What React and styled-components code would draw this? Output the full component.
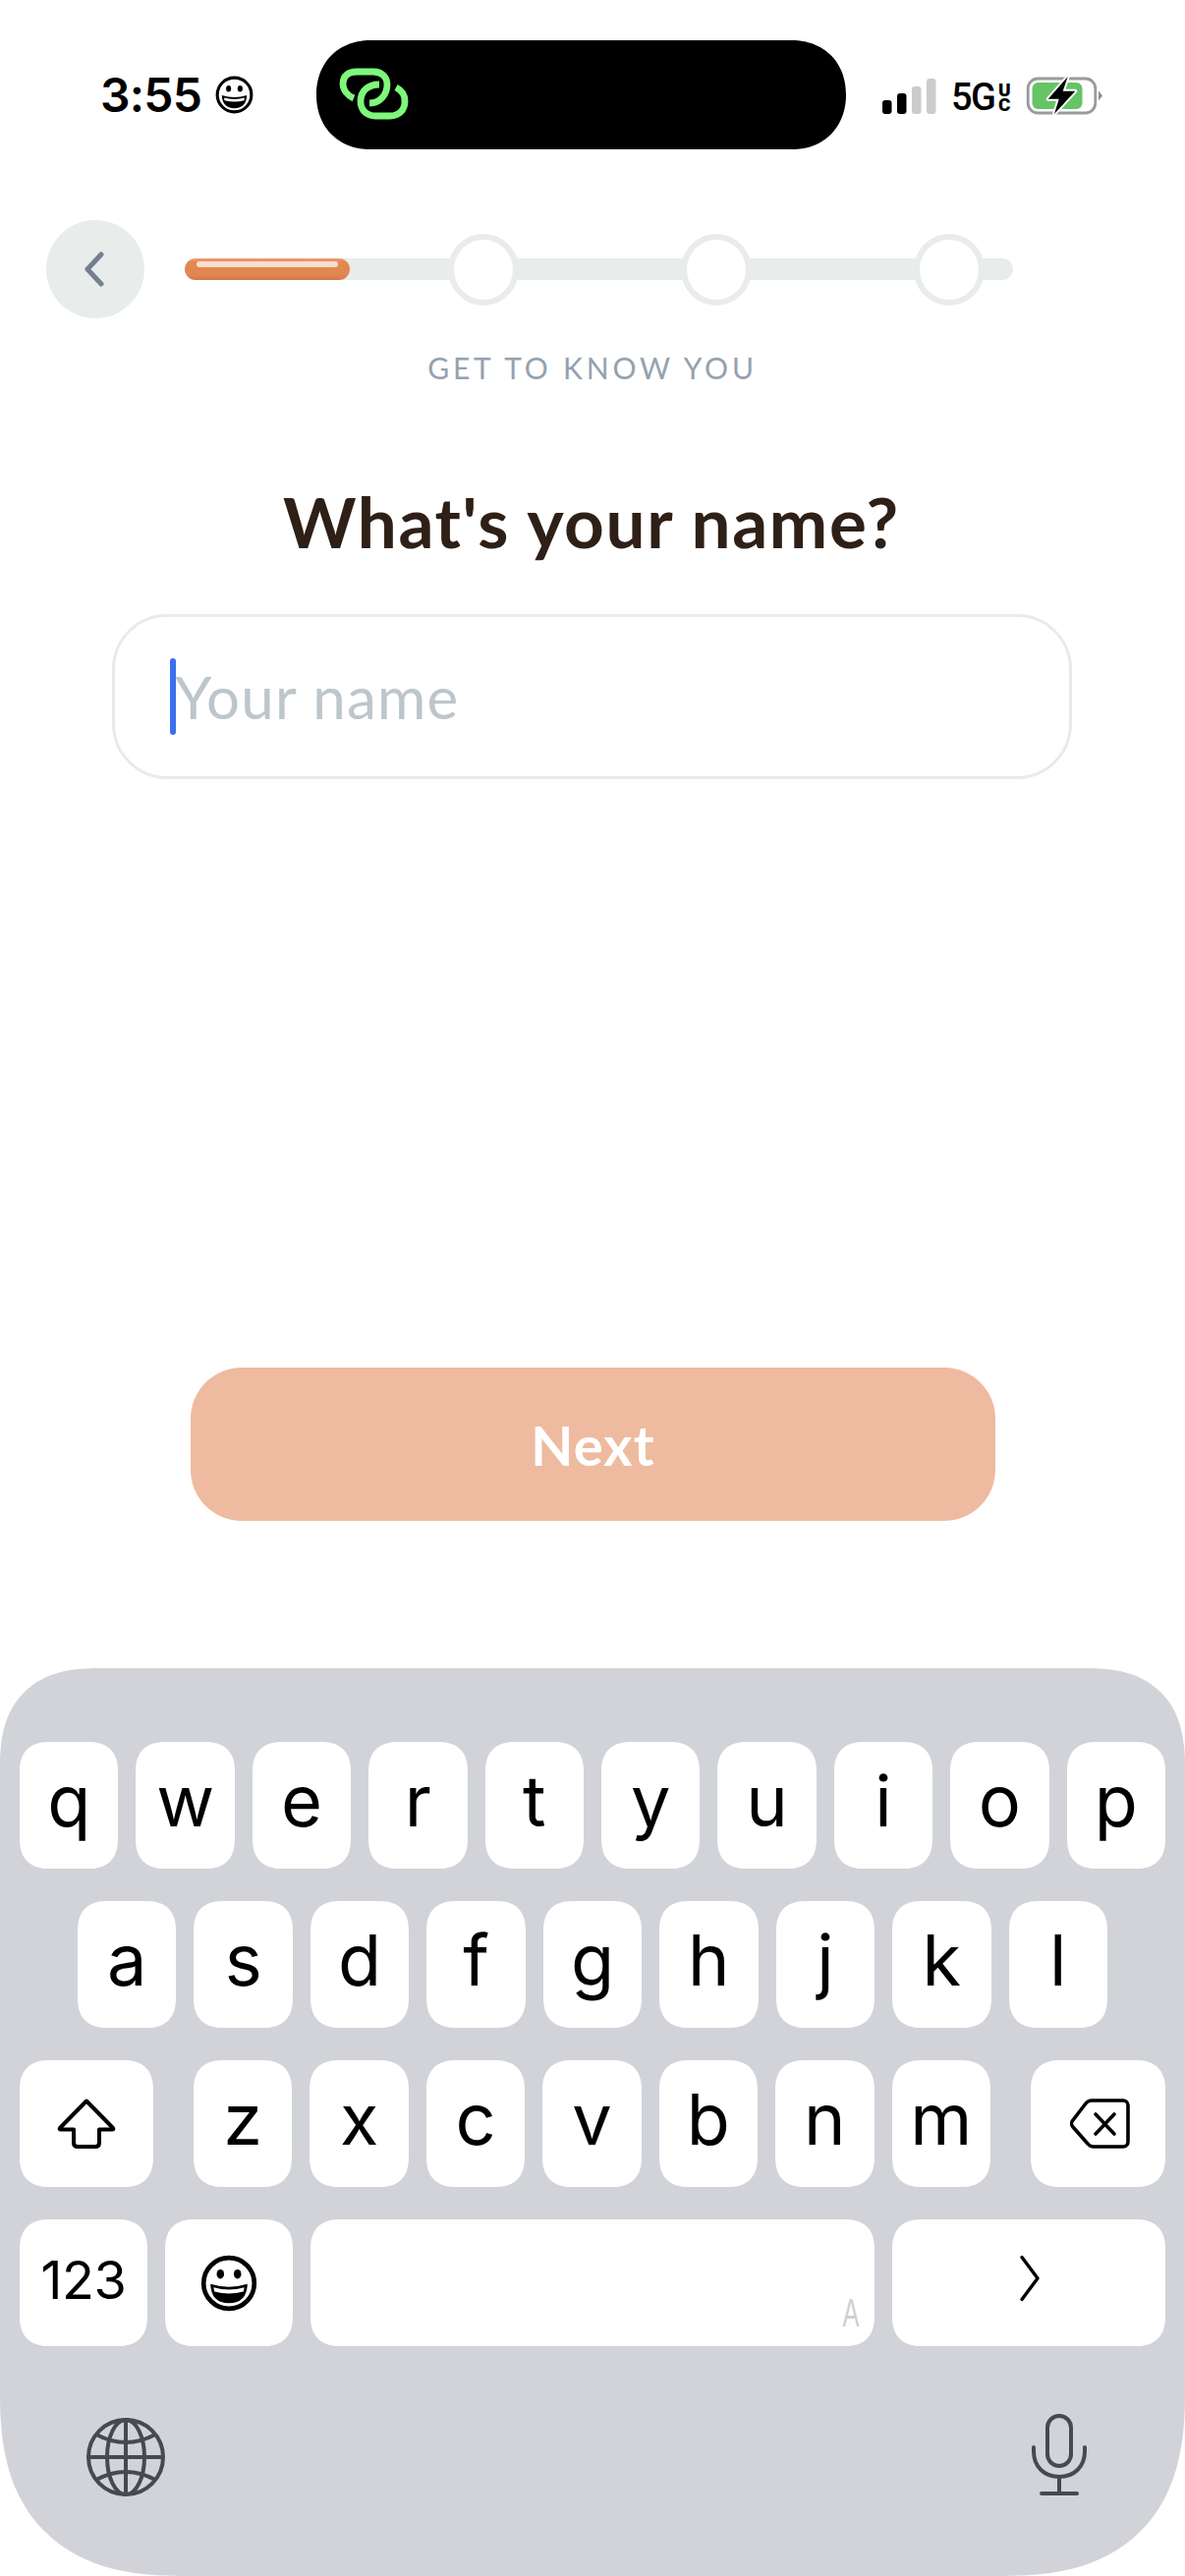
import React from "react";
import styled, { createGlobalStyle } from "styled-components";

const Global = createGlobalStyle`
  html, body { margin: 0; padding: 0; background: #fff; }
  * { box-sizing: border-box; }
`;

const Page = styled.div`
  width: 1206px;
  height: 2622px;
  display: flex;
  flex-direction: column;
  overflow: hidden;
  background: #fff;
  font-family: Lato, "Noto Sans", sans-serif;
`;

const StatusBar = styled.div`
  display: flex;
  align-items: center;
  height: 111px;
  margin-top: 41px;
  padding-left: 102px;
`;

const Time = styled.span`
  font-family: Inter, sans-serif;
  font-size: 48px;
  font-weight: 600;
  letter-spacing: -0.8px;
  color: #000;
  line-height: 1;
  width: 117px;
`;

const Island = styled.div`
  width: 539px;
  height: 111px;
  margin-left: 64px;
  margin-right: 37px;
  border-radius: 56px;
  corner-shape: superellipse(1.1);
  background: #000;
  display: flex;
  align-items: center;
  padding: 0 0 3px 13px;
`;

const StatusIcons = styled.div`
  display: flex;
  align-items: center;
  height: 40px;
  margin-top: 2px;
`;

const Network = styled.span`
  font-family: Roboto, sans-serif;
  font-size: 38px;
  font-weight: 500;
  line-height: 1;
  letter-spacing: -1.6px;
  color: #000;
  margin: 2px 0 0 15px;
  white-space: nowrap;
`;

const NetworkSub = styled.span`
  display: block;
  font-family: Roboto, sans-serif;
  font-size: 19px;
  font-weight: 900;
  line-height: 15px;
  color: #000;
  width: 14px;
  margin-left: 3px;
  margin-top: 2px;
  text-align: center;
  word-break: break-all;
`;

const Header = styled.div`
  display: flex;
  align-items: center;
  margin-top: 72px;
  padding-left: 47px;
  gap: 41px;
`;

const BackButton = styled.div`
  width: 100px;
  height: 100px;
  border-radius: 50%;
  background: #e8ecea;
  display: flex;
  align-items: center;
  justify-content: center;
  flex-shrink: 0;
  padding-right: 3px;
`;

const Track = styled.div`
  position: relative;
  width: 843px;
  height: 22px;
  border-radius: 11px;
  background: #e8ecea;
  display: flex;
  align-items: center;
  gap: 165px;
  padding-left: 268px;
`;

const Fill = styled.div`
  position: absolute;
  left: 0;
  top: 0;
  width: 168px;
  height: 22px;
  border-radius: 11px;
  background: linear-gradient(#e9a27a 0, #e38751 18%, #e38751 75%, #cf7a4b 100%);

  &::after {
    content: "";
    position: absolute;
    left: 12px;
    right: 12px;
    top: 3px;
    height: 6px;
    border-radius: 3px;
    background: rgba(255, 255, 255, 0.72);
  }
`;

const Dot = styled.div`
  width: 72px;
  height: 73px;
  flex-shrink: 0;
  border-radius: 50%;
  background: #fff;
  border: 6px solid #e8ecea;
`;

const StepLabel = styled.div`
  margin-top: 30px;
  height: 40px;
  line-height: 40px;
  text-align: center;
  font-size: 30px;
  font-weight: 400;
  letter-spacing: 3.8px;
  color: #95a1af;
`;

const Title = styled.h1`
  margin: 97px 0 0;
  height: 80px;
  line-height: 80px;
  text-align: center;
  font-size: 71px;
  font-weight: 700;
  letter-spacing: 1.6px;
  color: #2e2016;
  padding-right: 2px;
`;

const Field = styled.div`
  position: relative;
  width: 977px;
  height: 168px;
  margin: 54px 0 0 114px;
  border: 3px solid #e9ebe8;
  border-radius: 56px;
  display: flex;
  align-items: center;
  padding: 0 0 0 61px;
`;

const Caret = styled.span`
  position: absolute;
  left: 56px;
  top: 42px;
  width: 6px;
  height: 78px;
  border-radius: 3px;
  background: #3b6fec;
`;

const Placeholder = styled.span`
  font-size: 60px;
  font-weight: 400;
  letter-spacing: 1.2px;
  color: #bcc6cb;
  line-height: 1;
`;

const NextButton = styled.div`
  width: 819px;
  height: 156px;
  margin: 599px 0 0 194px;
  border-radius: 52px;
  background: #eebba0;
  color: #fff;
  font-size: 56px;
  font-weight: 700;
  letter-spacing: 1.2px;
  display: flex;
  align-items: center;
  justify-content: center;
`;

const Keyboard = styled.div`
  margin-top: auto;
  height: 924px;
  background: #d1d3d9;
  border-radius: 100px 100px 185px 185px;
  corner-shape: superellipse(1.3);
  padding: 75px 20px 0;
  display: flex;
  flex-direction: column;
  gap: 33px;
`;

const KeyRow = styled.div`
  display: flex;
  gap: 18px;
  padding: 0 ${(p) => p.$inset || 0}px;
`;

const Key = styled.div`
  position: relative;
  flex: ${(p) => (p.$w ? `0 0 ${p.$w}px` : "1 1 0")};
  height: 129px;
  margin-right: ${(p) => p.$after || 0}px;
  margin-left: ${(p) => p.$before || 0}px;
  border-radius: 31px;
  corner-shape: superellipse(1.3);
  background: #fff;
  color: #000;
  font-family: Inter, "Liberation Sans", sans-serif;
  font-size: 72px;
  font-weight: 400;
  line-height: 1;
  display: flex;
  align-items: center;
  justify-content: center;
  padding-bottom: 10px;
`;

const NumberKeyLabel = styled.span`
  font-size: 54px;
  letter-spacing: -0.5px;
  padding-top: 4px;
`;

const IconSlot = styled.span`
  display: flex;
  margin-top: ${(p) => p.$top || 0}px;
  margin-left: ${(p) => p.$left || 0}px;
`;

const SpaceHint = styled.span`
  position: absolute;
  right: 16px;
  bottom: 18px;
  font-family: "Liberation Sans", sans-serif;
  font-size: 41px;
  line-height: 32px;
  color: #d0d0d0;
  transform: scaleX(0.62);
  transform-origin: right bottom;
`;

const BottomRow = styled.div`
  display: flex;
  justify-content: space-between;
  align-items: center;
  margin-top: 40px;
  padding: 0 80px 0 68px;
`;

const Smiley = ({ size }) => (
  <svg width={size} height={size} viewBox="0 0 40 40">
    <circle cx="20" cy="20" r="17.8" fill="none" stroke="#000" strokeWidth="3.2" />
    <ellipse cx="14" cy="13.6" rx="2.6" ry="3.3" />
    <ellipse cx="26" cy="13.6" rx="2.6" ry="3.3" />
    <path d="M7 20.5 Q20 24.5 33 20.5 Q32.5 34 20 34 Q7.5 34 7 20.5 Z" />
    <path d="M9.2 23 Q20 26 30.8 23 L30.2 25.8 Q20 28.6 9.8 25.8 Z" fill="#fff" />
  </svg>
);

const Logo = () => (
  <svg width="90" height="70" viewBox="0 0 90 70" fill="none" stroke="#7ef87a" strokeWidth="6.8">
    <path d="M25 40 C18 37 14 31 14 25 C14 17 20 13 28 13 H45 C53 13 59 18 59 26 C59 36 52 45 41 45" />
    <path d="M68 29 C74 32 77 37 77 43 C77 52 71 58 62 58 H47 C38 58 32 52 32 43 C32 33 39 26 51 26" />
  </svg>
);

const Signal = () => (
  <svg width="55" height="36" viewBox="0 0 55 36">
    <rect x="0" y="22" width="9.5" height="14" rx="3" fill="#000" />
    <rect x="15" y="15" width="9.5" height="21" rx="3" fill="#000" />
    <rect x="30" y="8" width="9.5" height="28" rx="3" fill="#ccc" />
    <rect x="45" y="0" width="9.5" height="36" rx="3" fill="#ccc" />
  </svg>
);

const Battery = () => (
  <svg width="95" height="55" viewBox="0 0 95 55">
    <rect x="11.2" y="10" width="68.6" height="35" rx="10" fill="none" stroke="#9a9a9a" strokeWidth="2.8" />
    <rect x="15.5" y="14" width="51" height="27" rx="6" fill="#65c466" />
    <path d="M83 22.5 L87 27.5 L83 32.5 Z" fill="#8e8e8e" />
    <path
      d="M51.7 8 L31.7 30.7 H42.7 L38 46 L59.3 22.7 H46.7 Z"
      fill="#000"
      stroke="#fff"
      strokeWidth="4"
      strokeLinejoin="round"
      paintOrder="stroke"
    />
  </svg>
);

const Chevron = () => (
  <svg width="20" height="36" viewBox="0 0 20 36" fill="none" stroke="#75808f" strokeWidth="5" strokeLinecap="round" strokeLinejoin="round">
    <path d="M17 3 L3 18 L17 33" />
  </svg>
);

const ShiftIcon = () => (
  <svg width="60" height="51" viewBox="0 0 60 51" fill="none" stroke="#000" strokeWidth="4" strokeLinejoin="round">
    <path d="M30 2.5 L3 30 Q2 31.5 4 31.5 H17 V45 Q17 49 21 49 H39 Q43 49 43 45 V31.5 H56 Q58 31.5 57 30 Z" />
  </svg>
);

const BackspaceIcon = () => (
  <svg width="61" height="51" viewBox="0 0 61 51" fill="none" stroke="#000" strokeWidth="3.6" strokeLinecap="round" strokeLinejoin="round">
    <path d="M22 2 H54 a5 5 0 0 1 5 5 V44 a5 5 0 0 1 -5 5 H24 a8 8 0 0 1 -6 -3 L3 29 a5 5 0 0 1 0 -7 L16 5 a8 8 0 0 1 6 -3 Z" />
    <path d="M26 16 L45 36 M45 16 L26 36" />
  </svg>
);

const ReturnIcon = () => (
  <svg width="22" height="48" viewBox="0 0 22 48" fill="none" stroke="#000" strokeWidth="3.4" strokeLinecap="round" strokeLinejoin="round">
    <path d="M3 2.5 L19 24 L3 45.5" />
  </svg>
);

const Globe = () => (
  <svg width="80" height="80" viewBox="0 0 80 80" fill="none" stroke="#46494f" strokeWidth="4">
    <circle cx="40" cy="40" r="38" />
    <path d="M2 40 H78 M40 2 V78" />
    <ellipse cx="40" cy="40" rx="19" ry="38" />
    <path d="M10 17 Q40 33 70 17 M10 63 Q40 47 70 63" />
  </svg>
);

const Mic = () => (
  <svg width="56" height="84" viewBox="0 0 56 84" fill="none" stroke="#46494f" strokeWidth="4" strokeLinecap="round">
    <rect x="16" y="2" width="24" height="51" rx="12" />
    <path d="M2 34 V38 C2 54 13 64 28 64 C43 64 54 54 54 38 V34" />
    <path d="M28 64 V81 M10 81 H46" />
  </svg>
);

const row1 = ["q", "w", "e", "r", "t", "y", "u", "i", "o", "p"];
const row2 = ["a", "s", "d", "f", "g", "h", "j", "k", "l"];
const row3 = ["z", "x", "c", "v", "b", "n", "m"];

export default function App() {
  return (
    <Page>
      <Global />
      <StatusBar>
        <Time>3:55</Time>
        <Smiley size={39} />
        <Island>
          <Logo />
        </Island>
        <StatusIcons>
          <Signal />
          <Network>5G</Network>
          <NetworkSub>UC</NetworkSub>
          <IconSlot $left={6}>
            <Battery />
          </IconSlot>
        </StatusIcons>
      </StatusBar>

      <Header>
        <BackButton>
          <Chevron />
        </BackButton>
        <Track>
          <Fill />
          <Dot />
          <Dot />
          <Dot />
        </Track>
      </Header>
      <StepLabel>GET TO KNOW YOU</StepLabel>
      <Title>What's your name?</Title>
      <Field>
        <Caret />
        <Placeholder>Your name</Placeholder>
      </Field>
      <NextButton>Next</NextButton>

      <Keyboard>
        <KeyRow>
          {row1.map((k) => (
            <Key key={k}>{k}</Key>
          ))}
        </KeyRow>
        <KeyRow $inset={59}>
          {row2.map((k) => (
            <Key key={k}>{k}</Key>
          ))}
        </KeyRow>
        <KeyRow>
          <Key $w={136} $after={23}>
            <IconSlot $top={10}>
              <ShiftIcon />
            </IconSlot>
          </Key>
          {row3.map((k) => (
            <Key key={k}>{k}</Key>
          ))}
          <Key $w={137} $before={23}>
            <IconSlot $top={10} $left={4}>
              <BackspaceIcon />
            </IconSlot>
          </Key>
        </KeyRow>
        <KeyRow>
          <Key $w={130}>
            <NumberKeyLabel>123</NumberKeyLabel>
          </Key>
          <Key $w={130}>
            <IconSlot $top={10}>
              <Smiley size={58} />
            </IconSlot>
          </Key>
          <Key>
            <SpaceHint>A</SpaceHint>
          </Key>
          <Key $w={278}>
            <IconSlot $left={1}>
              <ReturnIcon />
            </IconSlot>
          </Key>
        </KeyRow>
        <BottomRow>
          <Globe />
          <IconSlot $top={-4}>
            <Mic />
          </IconSlot>
        </BottomRow>
      </Keyboard>
    </Page>
  );
}
